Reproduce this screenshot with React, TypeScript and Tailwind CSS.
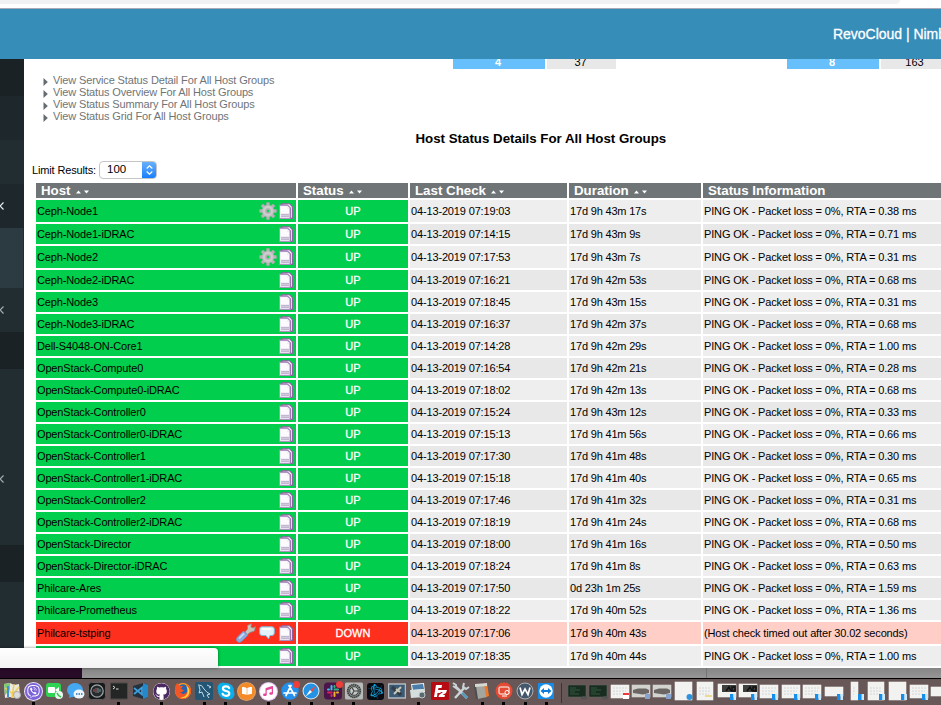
import React from "react";
import { FaViber, FaGithub, FaSkype, FaSlack, FaCog, FaAppStore, FaBattleNet, FaMusic, FaBookOpen } from "react-icons/fa";

const ping = (n: string) => `PING OK - Packet loss = 0%, RTA = ${n} ms`;

type Row = { host: string; check: string; dur: string; info: string; gear?: boolean; down?: boolean };

const rows: Row[] = [
  { host: "Ceph-Node1", check: "07:19:03", dur: "17d 9h 43m 17s", info: ping("0.38"), gear: true },
  { host: "Ceph-Node1-iDRAC", check: "07:14:15", dur: "17d 9h 43m 9s", info: ping("0.71") },
  { host: "Ceph-Node2", check: "07:17:53", dur: "17d 9h 43m 7s", info: ping("0.31"), gear: true },
  { host: "Ceph-Node2-iDRAC", check: "07:16:21", dur: "17d 9h 42m 53s", info: ping("0.68") },
  { host: "Ceph-Node3", check: "07:18:45", dur: "17d 9h 43m 15s", info: ping("0.31") },
  { host: "Ceph-Node3-iDRAC", check: "07:16:37", dur: "17d 9h 42m 37s", info: ping("0.68") },
  { host: "Dell-S4048-ON-Core1", check: "07:14:28", dur: "17d 9h 42m 29s", info: ping("1.00") },
  { host: "OpenStack-Compute0", check: "07:16:54", dur: "17d 9h 42m 21s", info: ping("0.28") },
  { host: "OpenStack-Compute0-iDRAC", check: "07:18:02", dur: "17d 9h 42m 13s", info: ping("0.68") },
  { host: "OpenStack-Controller0", check: "07:15:24", dur: "17d 9h 43m 12s", info: ping("0.33") },
  { host: "OpenStack-Controller0-iDRAC", check: "07:15:13", dur: "17d 9h 41m 56s", info: ping("0.66") },
  { host: "OpenStack-Controller1", check: "07:17:30", dur: "17d 9h 41m 48s", info: ping("0.30") },
  { host: "OpenStack-Controller1-iDRAC", check: "07:15:18", dur: "17d 9h 41m 40s", info: ping("0.65") },
  { host: "OpenStack-Controller2", check: "07:17:46", dur: "17d 9h 41m 32s", info: ping("0.31") },
  { host: "OpenStack-Controller2-iDRAC", check: "07:18:19", dur: "17d 9h 41m 24s", info: ping("0.68") },
  { host: "OpenStack-Director", check: "07:18:00", dur: "17d 9h 41m 16s", info: ping("0.50") },
  { host: "OpenStack-Director-iDRAC", check: "07:18:24", dur: "17d 9h 41m 8s", info: ping("0.63") },
  { host: "Philcare-Ares", check: "07:17:50", dur: "0d 23h 1m 25s", info: ping("1.59") },
  { host: "Philcare-Prometheus", check: "07:18:22", dur: "17d 9h 40m 52s", info: ping("1.36") },
  { host: "Philcare-tstping", check: "07:17:06", dur: "17d 9h 40m 43s", info: "(Host check timed out after 30.02 seconds)", down: true },
  { host: "", check: "07:18:35", dur: "17d 9h 40m 44s", info: ping("1.00") },
];

const links = [
  "View Service Status Detail For All Host Groups",
  "View Status Overview For All Host Groups",
  "View Status Summary For All Host Groups",
  "View Status Grid For All Host Groups",
];

const cols = "grid grid-cols-[260px_110px_157px_132px_238px] gap-x-[2px]";

function PageIcon() {
  return (
    <svg width="14" height="16" viewBox="0 0 14 16" className="block">
      <path d="M3 .7H10.500L13.400 3.600V15.400H3Z" fill="#f3edf7" stroke="#8a5f9f" strokeWidth="1.100" />
      <path d="M.5 2H8.500L11.300 4.800V15.400H.5Z" fill="#f1ecf6" stroke="#a98dbb" strokeWidth=".9" />
      <path d="M1 2H8.500L11.300 4.800V15" fill="none" stroke="#8e68a4" strokeWidth=".9" />
      <path d="M2 3.500H8V6H10V10H2Z" fill="#fbfafd" />
      <path d="M2 11.700H10M2 13.300H10" stroke="#b3a5c3" strokeWidth="1.100" />
    </svg>
  );
}

function GearIcon() {
  return (
    <svg width="18" height="18" viewBox="-9 -9 18 18" className="block">
      {[0, 45, 90, 135].map((a) => (
        <rect key={a} x="-1.700" y="-8.700" width="3.400" height="17.400" rx=".8" fill="#b5b3b5" stroke="#9a9a9a" strokeWidth=".3" transform={`rotate(${a})`} />
      ))}
      <circle r="6" fill="#c3c1c3" />
      <circle r="4" fill="none" stroke="#d0ced0" strokeWidth="1.500" />
      <circle r="2.500" fill="#b0aeb0" />
      <circle r="1.200" fill="#00dc50" />
    </svg>
  );
}

function WrenchIcon() {
  return (
    <svg width="20" height="20" viewBox="0 0 20 20" className="block">
      <path d="M9 9L11.500 6V2.500L15.500 .5L15 4L17 5L19.500 3.500L18.500 8L14 9.500L11 12Z" fill="#c9c5bd" stroke="#8f857c" strokeWidth=".8" />
      <path d="M7.500 8L12 12L5.500 18.500Q2.500 20.500 .8 18Q-.5 16 1.500 14Z" fill="#8ba9dc" stroke="#7890c0" strokeWidth=".7" />
      <path d="M3 15.500L8 10.500" stroke="#c6d8f5" strokeWidth="1.800" />
    </svg>
  );
}

function BubbleIcon() {
  return (
    <svg width="16" height="14" viewBox="0 0 16 14" className="block">
      <path d="M3 .8H13Q15.300 1 15.300 3V7Q15.300 9.500 13 9.500H11L9.500 13L7 9.500H3Q.7 9.500 .7 7V3Q.7 .8 3 .8Z" fill="#e2f1fa" stroke="#83b9d5" />
      <path d="M3 3H12" stroke="#fff" strokeWidth="2" />
    </svg>
  );
}

function Sort() {
  return (
    <svg width="14" height="4" viewBox="0 0 14 4" className="mt-[3px] ml-[5px] block">
      <path d="M0 3.500L2.500 .5L5 3.500ZM8 .5H13L10.500 3.500Z" fill="#fff" />
    </svg>
  );
}

function Head({ t, sort = true }: { t: string; sort?: boolean }) {
  return (
    <div className="flex h-[15px] items-center bg-[#6f7577] pl-[5px] text-[13.3px] leading-[15px] font-bold text-white">
      <span className="whitespace-nowrap">{t}</span>
      {sort && <Sort />}
    </div>
  );
}

function TableRow({ r, i }: { r: Row; i: number }) {
  const tall = r.gear || r.down;
  const status = r.down ? "bg-[#ff2f1d]" : "bg-[#00ce4c]";
  const cell = r.down ? "bg-[#ffcfc7]" : i % 2 ? "bg-[#e8e8e8]" : "bg-[#eeeeee]";
  return (
    <div className={`${cols} ${tall ? "h-[22px]" : "h-[20px]"} text-[11px] text-black`}>
      <div className={`flex items-center pr-[3px] pl-[1px] ${status}`}>
        <span className="flex-1 tracking-[-0.15px]">{r.host}</span>
        <div className="flex items-center gap-[2px]">
          {r.gear && <GearIcon />}
          {r.down && <WrenchIcon />}
          {r.down && <span className="mr-[2px] ml-[1px]"><BubbleIcon /></span>}
          <PageIcon />
        </div>
      </div>
      <div className={`flex items-center justify-center text-white [-webkit-text-stroke:0.3px_white] ${status}`}>
        {r.down ? "DOWN" : "UP"}
      </div>
      <div className={`flex items-center pl-[1px] ${cell}`}><span className="tracking-[-0.15px]">04-13-2019 {r.check}</span></div>
      <div className={`flex items-center pl-[1px] ${cell}`}><span className="tracking-[-0.18px]">{r.dur}</span></div>
      <div className={`flex items-center pl-[1px] ${cell}`}><span className="tracking-[-0.15px] whitespace-nowrap">{r.info}</span></div>
    </div>
  );
}

function Tile({ bg, round, children }: { bg: string; round?: boolean; children?: React.ReactNode }) {
  return <div className={`flex h-[17px] w-[17px] items-center justify-center overflow-hidden ${round ? "rounded-full" : "rounded-[3px]"} ${bg}`}>{children}</div>;
}

function Draw({ children }: { children: React.ReactNode }) {
  return <svg width="18" height="18" viewBox="0 0 18 18" className="block shrink-0">{children}</svg>;
}

const apps: { icon: React.ReactNode; on?: boolean; badge?: boolean }[] = [
  { icon: <Draw><path d="M1 2L7 1L11 3L16 2L17 15L11 16L7 15L2 16Z" fill="#e9e9df" /><path d="M1 2L7 1V8L2 13Z" fill="#83c875" /><path d="M2 6L10 12L16 5M11 2L9 16" stroke="#f3ca55" strokeWidth="1.500" fill="none" /><path d="M5 4V15" stroke="#3c91d8" strokeWidth="2" /><circle cx="14" cy="13" r="3.500" fill="#ddd" stroke="#aaa" /></Draw> },
  { icon: <Tile bg="bg-[#7d63d8] ring-1 ring-[#e7e2f8]" round><FaViber size={13} color="#fff" /></Tile>, on: true },
  { icon: <Draw><rect x="1" y="1" width="15" height="14" rx="3" fill="#2fd354" /><rect x="3" y="5" width="7" height="6" rx="1" fill="#fff" /><path d="M10 8L14 5V11Z" fill="#fff" /><circle cx="14" cy="13" r="4" fill="#e9f9ec" /><path d="M12 11Q13 14 16 15" stroke="#2fc44d" strokeWidth="1.500" fill="none" /></Draw> },
  { icon: <Draw><ellipse cx="8" cy="8" rx="8" ry="7" fill="#45a9f2" /><path d="M3 12L2 16L8 14Z" fill="#45a9f2" /><ellipse cx="12" cy="12" rx="5.500" ry="4.500" fill="#edf5fb" /><path d="M9 12H10.500M11.500 12H13M14 12H15.500" stroke="#2475bb" strokeWidth="1.500" /></Draw> },
  { icon: <Draw><rect x=".5" y=".5" width="17" height="17" rx="3" fill="#17181a" stroke="#5d5b5c" /><circle cx="9" cy="9" r="6.200" fill="#252a2c" stroke="#a3a9ab" strokeWidth="1.200" /><path d="M6 7V10M8 6V11" stroke="#a85a66" /><path d="M10 6V11M12 7V10" stroke="#6aa3a0" /></Draw> },
  { icon: <Draw><rect x=".5" y="1" width="17" height="16" rx="1" fill="#242626" stroke="#4b4949" /><path d="M3 4L5 5.500L3 7M6 7H8.500" stroke="#ddd" fill="none" /></Draw>, on: true },
  { icon: <Draw><path d="M2 4L12 1L17 3V15L12 17L2 14Z" fill="#23323e" /><path d="M12 1L17 3V15L12 17Z" fill="#2489ca" /><path d="M3 6L11 12.500V5.500L3 12" stroke="#3ba0e2" strokeWidth="1.700" fill="none" /></Draw> },
  { icon: <Tile bg="bg-white" round><FaGithub size={17} color="#4b2a64" /></Tile>, on: true },
  { icon: <Draw><circle cx="9" cy="9" r="8" fill="#ff9c1a" /><circle cx="9" cy="8" r="5.800" fill="#2962ad" /><path d="M1 7Q1 2 4 1L5 4L9 4L7 7L10 8Q8 11 6 10Q9 14 13 10Q15 6 12 2Q18 5 17 11Q14 18 7 17Q1 15 1 7Z" fill="#f35527" /><path d="M12 3Q18 8 14 14Q11 17 6 16Q17 14 12 3Z" fill="#ffd43b" /></Draw> },
  { icon: <Draw><rect width="18" height="18" rx="2" fill="#235574" /><path d="M3 3Q7 2 9 7Q12 11 15 12L12 13L14 16M4 4L5 8L4 11L7 10L9 15M12 3L16 5L14 6" stroke="#c5d9e3" fill="none" /></Draw>, on: true },
  { icon: <Draw><circle cx="6" cy="6" r="5.500" fill="#0aaeea" /><circle cx="12" cy="12" r="5.500" fill="#0aaeea" /><circle cx="9" cy="9" r="8" fill="#0aaeea" /><path d="M12.200 6Q11.500 4.300 9 4.300Q5.900 4.300 5.900 6.600Q5.900 8.400 9 9Q12.300 9.600 12.300 11.500Q12.300 13.800 9 13.800Q6.200 13.800 5.600 11.800" stroke="#fff" strokeWidth="2.200" fill="none" strokeLinecap="round" /></Draw>, on: true },
  { icon: <Tile bg="bg-[#f48b26] ring-1 ring-[#dca16c]" round><FaBookOpen size={10} color="#fff" /></Tile> },
  { icon: <Tile bg="bg-white ring-1 ring-[#e1c2ed]" round><FaMusic size={10} color="#e94598" /></Tile>, on: true },
  { icon: <Draw><circle cx="9" cy="9" r="8.700" fill="#2390ee" /><path d="M10 3.500L5 13.500M8 3.500L13.500 13.500M3 11H15" stroke="#fff" strokeWidth="1.700" strokeLinecap="round" /></Draw>, on: true, badge: true },
  { icon: <Draw><circle cx="9" cy="9" r="8.500" fill="#dfe8ef" /><circle cx="9" cy="9" r="7.500" fill="#2593e5" /><path d="M14.500 3.500L10 10L8 8Z" fill="#f0493d" /><path d="M3.500 14.500L8 8L10 10Z" fill="#fff" /></Draw>, on: true },
  { icon: <Draw><rect y=".5" width="18" height="17" rx="3.500" fill="#4b154b" /><g strokeWidth="2" strokeLinecap="round"><path d="M7.500 4V7.500M4 7.500H5" stroke="#36c5f0" /><path d="M10.500 7.500H14M10.500 4V5" stroke="#2eb67d" /><path d="M4 10.500H7.500M7.500 13V14" stroke="#e01e5a" /><path d="M10.500 10.500V14M13 10.500H14" stroke="#ecb22e" /></g></Draw>, on: true, badge: true },
  { icon: <Draw><rect y=".5" width="18" height="17" rx="1.500" fill="#b6bab8" /><circle cx="9" cy="9" r="6.300" fill="#8b908e" stroke="#3c403f" strokeWidth="1.800" strokeDasharray="1.500 .5" /><circle cx="9" cy="9" r="4.300" fill="#c5c9c7" stroke="#3f4443" /><path d="M9 9H13M9 9L7 12.500M9 9L7 5.500" stroke="#3f4443" strokeWidth="1.200" /></Draw>, on: true },
  { icon: <Tile bg="bg-[#080c12]"><FaBattleNet size={15} color="#119ed8" /></Tile> },
  { icon: <Draw><rect x=".5" y="2" width="17" height="14" fill="#3b5a75" stroke="#b2bbc0" strokeWidth="1.500" /><path d="M4 5L13 13" stroke="#343d44" strokeWidth="3.500" /><path d="M13 5L6 12M8 7L12 10" stroke="#c6c8b9" strokeWidth="2" /></Draw> },
  { icon: <Draw><path d="M2 2L15 1L16 10L3 11Z" fill="#f0f2ef" /><path d="M3 3L14 2L15 7L4 8Z" fill="#4b7dab" /><path d="M1 8L15 7L16 15L2 16Z" fill="#d5dddd" /><circle cx="13" cy="13" r="3" fill="#596b72" stroke="#bec7c5" /></Draw>, on: true },
  { icon: <Draw><rect width="18" height="18" rx="1" fill="#b60b12" /><path d="M3 15L5 3H11L10.500 6H7.500L7 8H10L9.500 11H6.500L6 15ZM9 8H16L15 11L11.500 13H14L13.500 15H7.500L8 13L12 10H9Z" fill="#fff" /></Draw> },
  { icon: <Draw><path d="M3 16L13 5M3 4L15 16" stroke="#cad4d7" strokeWidth="2.500" /><path d="M1 1L4 3L4 6L1 4M12 1L11 5L14 7L17 5" stroke="#cad4d7" strokeWidth="2" fill="none" /><path d="M10 11L15 16" stroke="#4999c2" strokeWidth="2" /></Draw> },
  { icon: <Draw><path d="M1 3L11 1V16L3 17Z" fill="#4a4d4e" /><path d="M3 4L12 3L14 15L5 17Z" fill="#a5a5a0" /><path d="M11 2L14 1L16 14L13 15Z" fill="#ef7929" /><path d="M2 2L14 1V4L2 5Z" fill="#d8d8d3" /></Draw>, on: true },
  { icon: <Draw><circle cx="9" cy="9" r="8.500" fill="#e44b32" /><rect x="4" y="5" width="10" height="7" rx="1" stroke="#fff" fill="none" /><path d="M7 14H12" stroke="#fff" /><circle cx="12" cy="10.500" r="2" fill="#e44b32" stroke="#fff" /></Draw>, on: true },
  { icon: <Draw><circle cx="9" cy="9" r="8" fill="#45576b" stroke="#aab1b8" /><path d="M4 5.500L6 12.500L9 7L12 12.500L14 5.500" fill="none" stroke="#fff" strokeWidth="1.700" /></Draw>, on: true },
  { icon: <Draw><rect x="1" y="1" width="16" height="16" rx="1" fill="#158bea" /><circle cx="9" cy="9" r="6.700" fill="#fff" /><path d="M3.500 9L7 6V8H11V6L14.500 9L11 12V10H7V12Z" fill="#127bd8" /></Draw>, on: true },
];

type Kind = "term" | "cal" | "photo" | "safari" | "tall" | "dark" | "doc" | "thin" | "short";
const thumbs: Kind[] = ["term", "term", "cal", "photo", "photo", "safari", "tall", "dark", "dark", "doc", "doc", "doc", "short", "thin", "tall", "safari", "doc", "short"];

const boxes: Record<Kind, number[]> = {
  term: [1, 4, 18, 12],
  cal: [1, 4, 18, 13],
  photo: [1, 4, 18, 12],
  safari: [1, 1, 17, 18],
  tall: [2, 1, 16, 18],
  dark: [1, 3, 18, 13],
  doc: [1, 4, 18, 13],
  thin: [6, 1, 7, 18],
  short: [1, 6, 18, 9],
};

function Thumb({ kind, i }: { kind: Kind; i: number }) {
  const fill = kind === "term" ? "#182c20" : kind === "photo" ? "#d2d2cf" : "#f2f2f1";
  const [x, y, w, h] = boxes[kind];
  return (
    <svg width="20" height="20" viewBox="0 0 20 20" className="block">
      <rect x={x} y={y} width={w} height={h} fill={fill} stroke={kind === "term" ? "#626563" : fill} strokeWidth=".6" />
      {kind === "term" && <path d="M3 7H9M3 9H13M3 11H8M3 13H12" stroke="#376541" strokeWidth=".8" />}
      {kind === "photo" && <path d="M2 9L7 7.500H15L18 9V12L12 13.500L2 12Z" fill="#6b6663" />}
      {kind === "dark" && <g><rect x="5" y="4" width="14" height="7" fill="#3c3f3e" /><path d="M9 10L12 6L14 10M15 6H18V10H15Z" stroke="#111" fill="none" strokeWidth="1.500" /></g>}
      {["doc", "tall", "thin", "cal"].includes(kind) && <path d={`M${x + 2} 7H${x + w - 2}M${x + 2} 10H${x + w - 3}M${x + 2} 13H${x + w - 4}`} stroke="#cfd1d4" strokeWidth=".9" strokeDasharray="2 1" />}
      {kind === "term" ? <ellipse cx="17" cy="17" rx="3" ry="1.700" fill="#555354" /> :
        kind === "cal" ? <g><rect x="13" y="12" width="6" height="6" fill="#fff" /><path d="M13 13H19" stroke="#ed3939" strokeWidth="2" /></g> :
        i === 5 ? <circle cx="15.500" cy="16" r="3" fill="#2c94df" /> :
        kind === "photo" ? <rect x="14" y="13" width="5" height="5" fill="#86a3ce" /> :
        i === 6 ? <path d="M10 15H17" stroke="#edcf70" strokeWidth="1.500" /> :
        <g><rect x="13" y="13" width="3.500" height="6" fill="#148fec" /><rect x="16.500" y="13" width="2.500" height="6" fill="#cde8fb" /></g>}
    </svg>
  );
}

const sidebar = [
  ["h-[37px]", "bg-[#1a2226]"], ["h-[44px]", "bg-[#1e282c]"], ["h-[44px]", "bg-[#222d32]"],
  ["h-[44px]", "bg-[#1e282c]", "#e8eef0"], ["h-[60px]", "bg-[#2c3b41] border-r border-[#222d32]"], ["h-[44px]", "bg-[#222d32]", "#a2b0b6"],
  ["h-[37px]", "bg-[#1a2226]"], ["h-[88px]", "bg-[#222d32]"], ["h-[44px]", "bg-[#222d32]", "#a2b0b6"], ["h-[44px]", "bg-[#222d32]"],
  ["h-[37px]", "bg-[#1a2226]"], ["h-[86px]", "bg-[#222d32]"],
];

export default function App() {
  return (
    <div className="relative flex h-[705px] w-[941px] flex-col overflow-hidden bg-white font-['Liberation_Sans',Arial,sans-serif]">
      <div className="h-[8px] shrink-0 bg-white"><div className="h-[4px] w-[900px] rounded-br-[6px] bg-[#f1f2f4]" /></div>
      <header className="flex h-[51px] shrink-0 items-center border-t border-[#a9a9b8] bg-[#368db8] pl-[833px] text-[14px] whitespace-nowrap text-white">
        <span className="tracking-[-0.02px] [-webkit-text-stroke:0.3px_white]">RevoCloud | Nimbus</span>
      </header>
      <div className="flex h-[609px] shrink-0 overflow-hidden">
        <aside className="w-[24px] shrink-0">
          {sidebar.map(([h, bg, arrow], i) => (
            <div key={i} className={`flex items-center ${h} ${bg}`}>
              {arrow && <svg width="5" height="8" viewBox="0 0 5 8" className="-mt-px -ml-px block"><path d="M4.500 .5L1 4L4.500 7.500" fill="none" stroke={arrow} strokeWidth="1.200" /></svg>}
            </div>
          ))}
        </aside>
        <main className="flex-1">
          <div className="flex h-[10px] gap-[2px] overflow-hidden pl-[429px] text-[11px] leading-[7px]">
            <div className="w-[92px] shrink-0 bg-[#67c0fb] pr-[2px] text-center font-bold text-white">4</div>
            <div className="w-[69px] shrink-0 bg-[#e8e8e8] pr-[2px] text-center">37</div>
            <div className="w-[167px] shrink-0" />
            <div className="w-[92px] shrink-0 bg-[#67c0fb] pr-[2px] text-center font-bold text-white">8</div>
            <div className="w-[69px] shrink-0 bg-[#e8e8e8] pr-[2px] text-center">163</div>
          </div>
          <div className="mt-[5px] h-[49px] pl-[19px] text-[11px] leading-[12px] text-[#6f7577]">
            {links.map((l) => (
              <div key={l} className="flex items-center">
                <svg width="5" height="8" viewBox="0 0 5 8" className="mt-[3px] mr-[5px] block"><path d="M.5 0L4.800 4L.5 8Z" fill="#666b6d" /></svg>
                <span className="tracking-[-0.14px]">{l}</span>
              </div>
            ))}
          </div>
          <h1 className="mt-[8px] h-[16px] pl-[391.5px] text-[13.3px] leading-[16px] font-bold whitespace-nowrap text-black">Host Status Details For All Host Groups</h1>
          <div className="mt-[14px] flex h-[18px] items-center pl-[8px] text-[11px]">
            <span className="w-[67px] tracking-[-0.15px] whitespace-nowrap">Limit Results:</span>
            <div className="flex h-[18px] w-[58px] items-center overflow-hidden rounded-[4px] border border-[#c5c5c5] bg-white">
              <span className="flex-1 pl-[7px] text-[11.5px]">100</span>
              <div className="-my-px -mr-px flex h-[18px] w-[15px] items-center justify-center bg-linear-to-b from-[#6bb3fb] to-[#087bfc]">
                <svg width="7" height="10" viewBox="0 0 7 10"><path d="M.7 3.500L3.500 .8L6.300 3.500M.7 6.500L3.500 9.200L6.300 6.500" stroke="#fff" strokeWidth="1.200" fill="none" /></svg>
              </div>
            </div>
          </div>
          <div className="mt-[4px] flex flex-col gap-[2px] pl-[12px]">
            <div className={cols}>
              <Head t="Host" />
              <Head t="Status" />
              <Head t="Last Check" />
              <Head t="Duration" />
              <Head t="Status Information" sort={false} />
            </div>
            {rows.map((r, i) => <TableRow key={i} r={r} i={i} />)}
          </div>
        </main>
      </div>
      <div className="flex h-[10px] shrink-0 bg-linear-to-b from-[#858585] to-[#969696]">
        <div className="w-[82px] bg-[#270b27]" />
        <div className="w-[625px] border-r border-[#747474]" />
      </div>
      <footer className="flex h-[27px] shrink-0 border-t border-black bg-[#675756] pl-[1px]">
        {apps.map((a, i) => (
          <div key={i} className="relative flex w-[21.4px] shrink-0 flex-col items-center pt-[3px]">
            <div className="flex h-[18px] items-center">{a.icon}</div>
            {a.badge && <div className="absolute top-[2px] right-0 h-[7px] w-[7px] rounded-full bg-[#ee3e3c]" />}
            {a.on && <div className="mt-[2px] h-[3px] w-[3px] bg-black" />}
          </div>
        ))}
        <div className="mt-[4px] mr-[4px] ml-[4px] h-[20px] w-px shrink-0 bg-[#3d3333]" />
        {thumbs.map((k, i) => <div key={i} className="flex w-[21.4px] shrink-0 justify-center pt-[2px]"><Thumb kind={k} i={i} /></div>)}
      </footer>
      <div className="absolute top-[648px] left-0 h-[20px] w-[218px] rounded-tr-[4px] bg-linear-to-b from-white to-[#f3f3f3] shadow-[0_0_3px_rgba(0,0,0,0.5)]" />
    </div>
  );
}
